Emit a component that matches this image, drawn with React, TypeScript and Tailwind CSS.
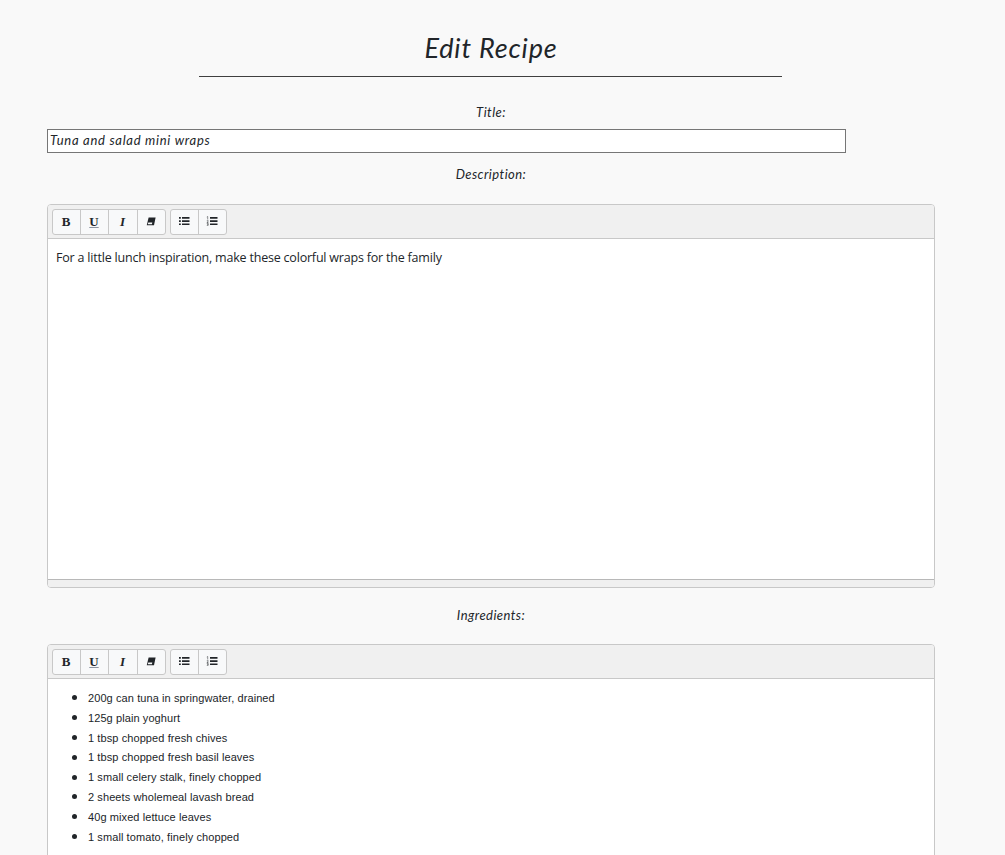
import type { ReactNode } from 'react';

const ingredients = [
  '200g can tuna in springwater, drained',
  '125g plain yoghurt',
  '1 tbsp chopped fresh chives',
  '1 tbsp chopped fresh basil leaves',
  '1 small celery stalk, finely chopped',
  '2 sheets wholemeal lavash bread',
  '40g mixed lettuce leaves',
  '1 small tomato, finely chopped',
];

function EraserIcon() {
  return (
    <svg width="11" height="10" viewBox="0 0 11 10">
      <path d="M2.6 1.5H9.6L8 9.2H0.8Z" fill="#212529" />
      <path d="M2.3 6.6H6.3L5.9 8.3H1.8Z" fill="#f8f9fa" />
    </svg>
  );
}

function ListIcon({ ordered = false }: { ordered?: boolean }) {
  return (
    <svg width="12" height="10" viewBox="0 0 12 10">
      <path d="M4 1H11.5V2.7H4ZM4 4.2H11.5V5.9H4ZM4 7.4H11.5V9.1H4Z" fill="#212529" />
      {ordered ? (
        <path d="M0.8 1L1.7 0.5V3.5M0.8 4.7H2.2V5.4L0.9 6.5H2.4M0.8 7.4H2.2V9.4H0.8M1.2 8.4H2.2" fill="none" stroke="#212529" strokeWidth="0.5" />
      ) : (
        <path d="M1 1H2.8V2.7H1ZM1 4.2H2.8V5.9H1ZM1 7.4H2.8V9.1H1Z" fill="#212529" />
      )}
    </svg>
  );
}

function Tool({ label, className, children }: { label: string; className: string; children: ReactNode }) {
  return (
    <button aria-label={label} className={`flex h-full items-center justify-center pr-px pb-[2px] ${className}`}>
      {children}
    </button>
  );
}

function Toolbar() {
  const group =
    "flex h-[26px] overflow-hidden rounded-[3px] border border-[#c8c8c8] bg-[#f8f9fa] font-['Liberation_Serif',serif] text-[13px] leading-none font-bold text-[#212529]";
  return (
    <div className="flex h-[34px] gap-1 border-b border-[#c8c8c8] bg-[#f0f0f0] px-1 pt-1">
      <div className={`${group} w-[114px]`}>
        <Tool label="Bold" className="w-7 border-r border-[#c8c8c8]">B</Tool>
        <Tool label="Underline" className="w-7 border-r border-[#c8c8c8]">
          <span className="underline decoration-[#8b93a0] decoration-1 underline-offset-1">U</span>
        </Tool>
        <Tool label="Italic" className="w-[29px] border-r border-[#c8c8c8]"><span className="italic">I</span></Tool>
        <Tool label="Clear formatting" className="w-[27px]"><EraserIcon /></Tool>
      </div>
      <div className={`${group} w-[57px]`}>
        <Tool label="Unordered list" className="w-7 border-r border-[#c8c8c8]"><ListIcon /></Tool>
        <Tool label="Ordered list" className="w-[27px]"><ListIcon ordered /></Tool>
      </div>
    </div>
  );
}

function Editor({ children }: { children: ReactNode }) {
  return (
    <section className="flex h-[384px] w-[888px] flex-col overflow-hidden rounded-[4px] border border-[#c8c8c8] bg-white">
      <Toolbar />
      <div className="grow">{children}</div>
      <div className="h-2 border-t border-[#b8b8b8] bg-[#f0f0f0]" />
    </section>
  );
}

function Label({ children }: { children: ReactNode }) {
  return <div className="text-center text-[13px] leading-5 tracking-[0.45px] italic">{children}</div>;
}

export default function App() {
  return (
    <main className="h-[855px] overflow-hidden bg-[#f9f9f9] pl-[47px] font-[Lato,sans-serif] text-[#212529]">
      <div className="w-[888px]">
        <h1 className="pt-[31px] text-center text-[27px] leading-[34px] tracking-[0.85px] italic">Edit Recipe</h1>
        <hr className="mt-[11px] ml-[152px] w-[583px] border-[#404040]" />
        <div className="mt-[25px]"><Label>Title:</Label></div>
        <input
          aria-label="Title"
          defaultValue="Tuna and salad mini wraps"
          className="mt-[7px] block h-[24px] w-[799px] border border-[#767676] bg-white px-[2px] pb-[2px] text-[13px] tracking-[0.72px] italic"
        />
        <div className="mt-[11px] mb-[20px]"><Label>Description:</Label></div>
        <Editor>
          <p className="px-2 pt-2 font-['Open_Sans',sans-serif] text-[12.5px] leading-[21px] tracking-[-0.2px]">
            For a little lunch inspiration, make these colorful wraps for the family
          </p>
        </Editor>
        <div className="mt-[17px] mb-[19px]"><Label>Ingredients:</Label></div>
        <Editor>
          <ul className="pt-[10px] pl-[24px] font-['Liberation_Sans',sans-serif] text-[11px] leading-[19.8px] tracking-[0.09px]">
            {ingredients.map((item) => (
              <li key={item} className="flex items-center gap-[11px]">
                <span className="mb-[2px] size-[5px] rounded-full bg-[#212529]" />
                <span>{item}</span>
              </li>
            ))}
          </ul>
        </Editor>
      </div>
    </main>
  );
}
